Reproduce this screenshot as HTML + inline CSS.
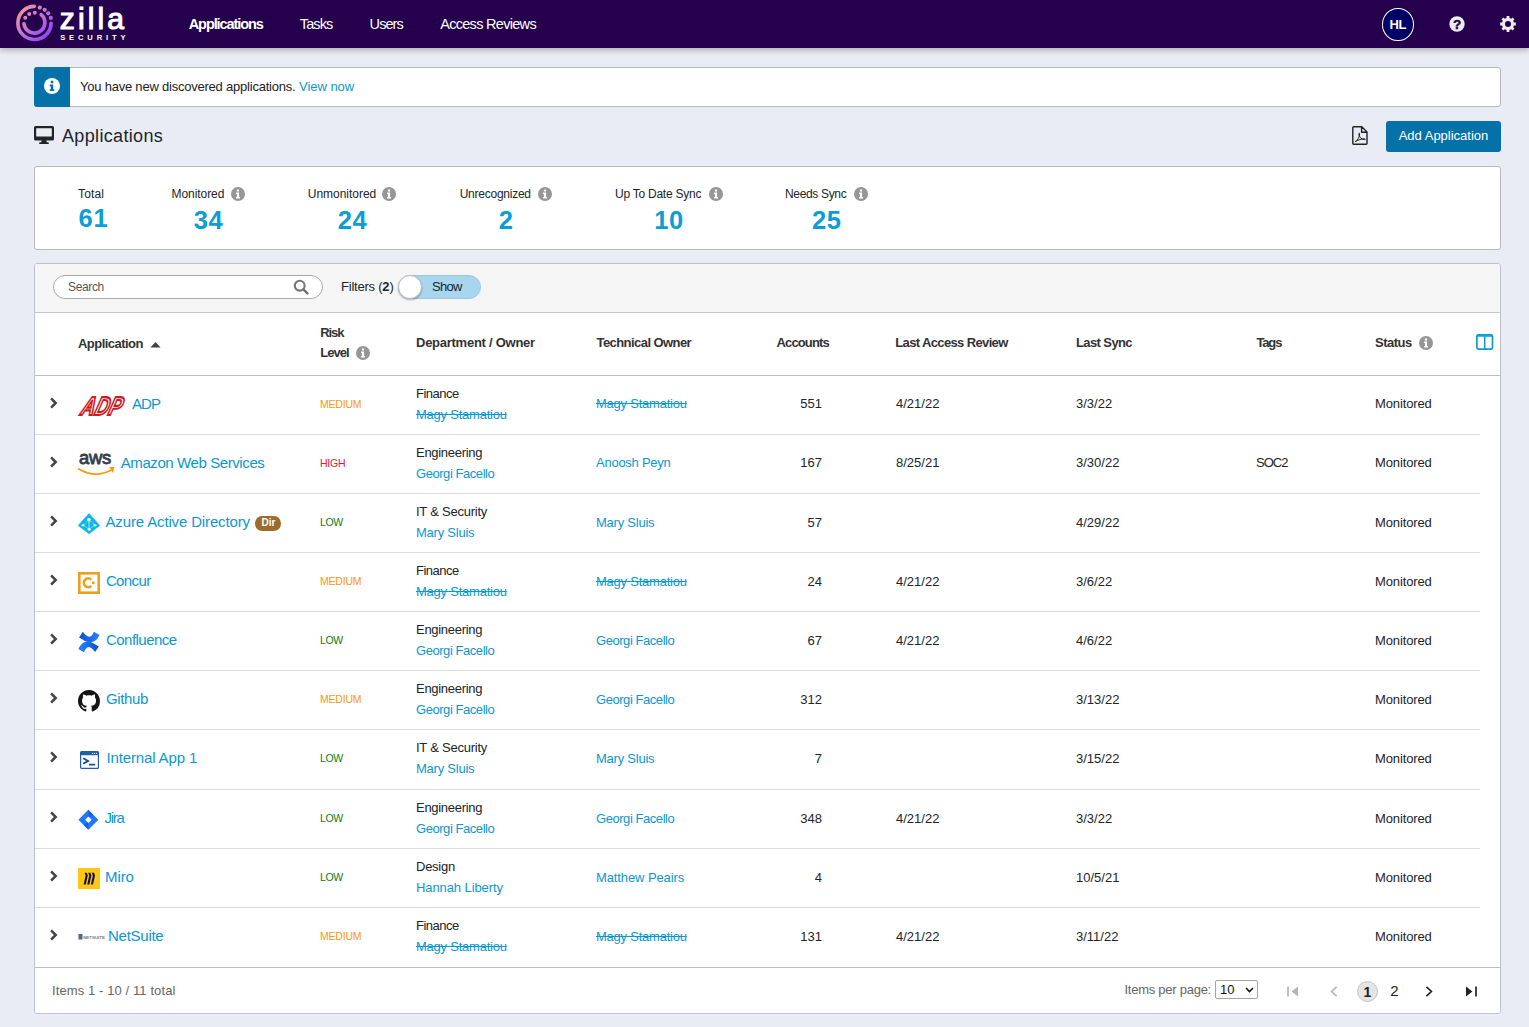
<!DOCTYPE html>
<html lang="en">
<head>
<meta charset="utf-8">
<title>Zilla Security - Applications</title>
<style>
*{box-sizing:border-box;margin:0;padding:0}
html,body{width:1529px;height:1027px;overflow:hidden}
body{background:#e9ecf4;font-family:"Liberation Sans",sans-serif;font-size:13px;color:#212529;position:relative}
a{color:#0a98d0;text-decoration:none}
svg{display:block;overflow:visible}
/* top nav */
#nav{position:absolute;left:0;top:0;width:1529px;height:48px;background:#25004d;box-shadow:0 2px 6px rgba(0,0,0,.28)}
#nav .item{position:absolute;top:15.5px;font-size:14.5px;color:#fff;line-height:16px;white-space:nowrap}
#nav .item.act{font-weight:bold}
#avatar{position:absolute;left:1382px;top:8px;width:31.5px;height:33px;border-radius:50%;background:#000066;border:1px solid #fff;color:#fff;font-weight:bold;font-size:13px;text-align:center;line-height:31.5px;letter-spacing:-.5px}
#logo{position:absolute;left:0;top:0}
/* banner */
#banner{position:absolute;left:34px;top:67px;width:1467px;height:40px;background:#fff;border:1px solid #b9b9b9;border-radius:3px}
#banner .ic{position:absolute;left:-1px;top:-1px;width:36px;height:40px;background:#0472a8;border-radius:3px 0 0 3px}
#banner .tx{position:absolute;left:45px;top:11px;font-size:13px;line-height:16px;white-space:nowrap;color:#222}
/* title */
#title{position:absolute;left:62px;top:125px;font-size:18px;line-height:22px;color:#212529;white-space:nowrap}
#addbtn{position:absolute;left:1386px;top:121px;width:115px;height:31px;background:#0472a8;border-radius:3px;color:#fff;font-size:13px;line-height:30px;text-align:center;white-space:nowrap}
/* stats */
#stats{position:absolute;left:34px;top:166px;width:1467px;height:84px;background:#fff;border:1px solid #b9b9b9;border-radius:3px}
.st{position:absolute;top:0;height:82px}
.st .l{position:absolute;left:0;top:20px;font-size:12px;line-height:14px;color:#212529;white-space:nowrap}
.st .i{position:absolute;top:20px}
.st .n{position:absolute;left:0;width:100%;text-align:center;top:39px;font-size:25.5px;font-weight:bold;color:#0c9dd6;line-height:30px;letter-spacing:.6px;text-indent:.6px}
/* grid panel */
#panel{position:absolute;left:34px;top:263px;width:1467px;height:751px;background:#fff;border:1px solid #bcc2cc;border-radius:3px;overflow:hidden}
#tool{position:absolute;left:0;top:0;width:1465px;height:49px;background:#f5f5f5;border-bottom:1px solid #c3c8d0}
#search{position:absolute;left:18px;top:11px;width:270px;height:24px;border:1px solid #a9a9a9;border-radius:12px;background:#fff}
#search>span{position:absolute;left:14px;top:4px;font-size:12px;line-height:14px;color:#555}
#search svg{position:absolute;left:239px;top:3px}
#filt{position:absolute;left:306px;top:15px;font-size:13px;line-height:16px;white-space:nowrap;color:#212529}
#toggle{position:absolute;left:363px;top:11px;width:83px;height:24px;border-radius:12px;background:#a9d6ef;border:1px solid #9cc7df}
#toggle i{position:absolute;left:-1px;top:-1px;width:24px;height:24px;border-radius:50%;background:#fff;border:1px solid #bdbdbd;box-shadow:0 1px 2px rgba(0,0,0,.3)}
#toggle>span{position:absolute;left:33px;top:3px;font-size:13px;line-height:16px;color:#212529}
/* header */
#head{position:absolute;left:0;top:50px;width:1465px;height:62px;border-bottom:1px solid #bfbfbf}
#head .h{position:absolute;font-weight:bold;font-size:13px;line-height:16px;color:#333;white-space:nowrap}
#head svg{position:absolute}
/* rows */
.row{position:absolute;left:0;width:1445px;height:59px;border-bottom:1px solid #dcdcdc}
.row>*{position:absolute;white-space:nowrap;font-size:13px;line-height:16px}
.row .app{left:43px;top:-1px;height:58px;display:flex;align-items:center;font-size:15px}
.row .app svg{flex:none}
.row .app a{display:block;line-height:18px}
.row .risk{left:285px;top:20px;font-size:10.5px}
.risk.m{color:#fb980c}.risk.h{color:#e3173e}.risk.lo{color:#0f7a10}
.row .dep{left:381px;top:10px}
.row .own{left:381px;top:31px}
.row .tech{left:561px;top:20px}
.row .acc{left:700px;width:87px;text-align:right;top:20px}
.row .lar{left:861px;top:20px}
.row .ls{left:1041px;top:20px}
.row .tag{left:1221px;top:20px}
.row .stt{left:1340px;top:20px}
.row .chev{left:15px;top:21px}
.x{text-decoration:line-through}
.dir{display:inline-block;margin-left:5.5px;width:26px;height:14.5px;border-radius:7.25px;background:#9b6c2c;color:#fff;font-size:10px;font-weight:bold;line-height:14.5px;text-align:center;position:relative;top:1.5px}
/* footer */
#foot{position:absolute;left:0;top:703px;width:1465px;height:46px;border-top:1px solid #bfbfbf;background:#fff}
#foot .t{position:absolute;font-size:13px;line-height:16px;color:#666;white-space:nowrap}
#foot svg{position:absolute}
</style>
</head>
<body>

<div id="nav">
<svg id="logo" width="140" height="48" viewBox="0 0 140 48">
<defs><linearGradient id="lg" gradientUnits="userSpaceOnUse" x1="19" y1="8" x2="49" y2="40"><stop offset="0" stop-color="#f59c90"/><stop offset=".5" stop-color="#c070d8"/><stop offset="1" stop-color="#8a3ffc"/></linearGradient></defs>
<g fill="none" stroke="url(#lg)" stroke-linecap="round">
<path d="M34.36 6.35 A16.6 16.6 0 1 0 51.1 23.35" stroke-width="3.6"/>
<path d="M24.02 23.84 A10.45 10.45 0 1 0 41.21 14.68" stroke-width="3.7"/>
</g>
<g fill="url(#lg)"><circle cx="39.8" cy="7.6" r="2.1"/><circle cx="44.7" cy="9.8" r="2.1"/><circle cx="48.2" cy="13.35" r="2.1"/><circle cx="50.8" cy="17.9" r="2.1"/>
<circle cx="25.3" cy="17.8" r="2"/><circle cx="29.3" cy="14" r="2"/><circle cx="34.8" cy="12.7" r="2"/></g>
<text x="59.8" y="29.3" font-family="Liberation Sans,sans-serif" font-size="30" fill="#fff" stroke="#fff" stroke-width="1.1" letter-spacing="3.1">zilla</text>
<text x="60.2" y="39.9" font-family="Liberation Sans,sans-serif" font-size="7.6" font-weight="bold" fill="#fff" letter-spacing="3.85">SECURITY</text>
</svg>
<div class="item act" style="left:188.7px"><span style="letter-spacing:-1.07px">Applications</span></div>
<div class="item" style="left:299.8px"><span style="letter-spacing:-0.9px">Tasks</span></div>
<div class="item" style="left:369.6px"><span style="letter-spacing:-0.93px">Users</span></div>
<div class="item" style="left:440.2px"><span style="letter-spacing:-0.7px">Access Reviews</span></div>
<div id="avatar">HL</div>
<svg style="position:absolute;left:1449px;top:15.6px" width="16" height="16" viewBox="0 0 16 16"><circle cx="8" cy="8" r="7.7" fill="#ececec"/><text x="8" y="12.8" text-anchor="middle" font-family="Liberation Sans,sans-serif" font-weight="bold" font-size="13.5" fill="#25004d" stroke="#25004d" stroke-width=".4">?</text></svg>
<svg style="position:absolute;left:1500px;top:15.6px" width="16" height="16" viewBox="0 0 16 16"><path fill="#ececec" fill-rule="evenodd" d="M13.93 6.58 L15.88 6.62 L15.88 9.38 L13.93 9.42 L13.20 11.19 L14.55 12.60 L12.60 14.55 L11.19 13.20 L9.42 13.93 L9.38 15.88 L6.62 15.88 L6.58 13.93 L4.81 13.20 L3.40 14.55 L1.45 12.60 L2.80 11.19 L2.07 9.42 L0.12 9.38 L0.12 6.62 L2.07 6.58 L2.80 4.81 L1.45 3.40 L3.40 1.45 L4.81 2.80 L6.58 2.07 L6.62 0.12 L9.38 0.12 L9.42 2.07 L11.19 2.80 L12.60 1.45 L14.55 3.40 L13.20 4.81Z M5.00 8.00 a3.00 3.00 0 1 0 6.00 0 a3.00 3.00 0 1 0 -6.00 0Z"/></svg>
</div>
<div id="banner"><div class="ic"><svg style="position:absolute;left:10px;top:11.3px" width="16" height="16" viewBox="0 0 14 14"><circle cx="7" cy="7" r="7" fill="#fff"/><path fill="#0472a8" d="M5.9 2.5h2.2v2H5.9z M5 5.7h3.1v4.2H9v1.5H5V9.9h.9V7.2H5z"/></svg></div>
<div class="tx"><span style="letter-spacing:-0.22px">You have new discovered applications.</span> <a><span style="letter-spacing:-0.04px">View now</span></a></div></div>
<svg style="position:absolute;left:34px;top:126px" width="20" height="18" viewBox="0 0 20 18"><path fill="#212529" fill-rule="evenodd" d="M1.6 0h16.8A1.6 1.6 0 0 1 20 1.6v11.3a1.6 1.6 0 0 1-1.6 1.6h-6.1l.5 1.7h1.3a.8.8 0 0 1 0 1.7H5.9a.8.8 0 0 1 0-1.7h1.3l.5-1.7H1.6A1.6 1.6 0 0 1 0 12.9V1.6A1.6 1.6 0 0 1 1.6 0z M2.2 2.2v8.4h15.6V2.2z"/></svg>
<div id="title"><span style="letter-spacing:0.34px">Applications</span></div>
<svg style="position:absolute;left:1352px;top:126px" width="16" height="19" viewBox="0 0 16 19"><path d="M1.6 0.8h8.2l5.2 5.2v11.4a.8.8 0 0 1-.8.8H1.6a.8.8 0 0 1-.8-.8V1.6a.8.8 0 0 1 .8-.8z M9.6 1v5.2H15" fill="none" stroke="#222" stroke-width="1.4" stroke-linejoin="round"/><path d="M3.3 15.6c2.2-1.2 4-4 4.4-7.600c.1-1.100-.9-1.100-.9-.1c0 2.700 2.500 5.400 5.800 5.700c1 .1 1-.8 0-.8c-2.800 0-6.500 1.100-9.300 2.800z" fill="none" stroke="#222" stroke-width="1"/></svg>
<div id="addbtn">Add Application</div>
<div id="stats">
<div class="st" style="left:43px;width:26px">
<div class="l"><span style="letter-spacing:0.15px">Total</span></div>
<div class="n" style="top:35.5px">61</div></div>
<div class="st" style="left:136.5px;width:73.5px">
<div class="l"><span style="letter-spacing:-0.06px">Monitored</span></div>
<div class="i" style="left:59.5px"><svg width="14" height="14" viewBox="0 0 14 14"><circle cx="7" cy="7" r="7" fill="#969696"/><path fill="#fff" d="M5.9 2.4h2.2v2H5.9z M5 5.6h3.1v4.3H9v1.5H5V9.9h.9V7.1H5z"/></svg></div>
<div class="n" style="top:37.5px">34</div></div>
<div class="st" style="left:272.8px;width:88.7px">
<div class="l"><span style="letter-spacing:-0.03px">Unmonitored</span></div>
<div class="i" style="left:74.7px"><svg width="14" height="14" viewBox="0 0 14 14"><circle cx="7" cy="7" r="7" fill="#969696"/><path fill="#fff" d="M5.9 2.4h2.2v2H5.9z M5 5.6h3.1v4.3H9v1.5H5V9.9h.9V7.1H5z"/></svg></div>
<div class="n" style="top:37.5px">24</div></div>
<div class="st" style="left:424.7px;width:92.3px">
<div class="l"><span style="letter-spacing:-0.245px">Unrecognized</span></div>
<div class="i" style="left:78.3px"><svg width="14" height="14" viewBox="0 0 14 14"><circle cx="7" cy="7" r="7" fill="#969696"/><path fill="#fff" d="M5.9 2.4h2.2v2H5.9z M5 5.6h3.1v4.3H9v1.5H5V9.9h.9V7.1H5z"/></svg></div>
<div class="n" style="top:37.5px">2</div></div>
<div class="st" style="left:580px;width:107.6px">
<div class="l"><span style="letter-spacing:-0.243px">Up To Date Sync</span></div>
<div class="i" style="left:93.6px"><svg width="14" height="14" viewBox="0 0 14 14"><circle cx="7" cy="7" r="7" fill="#969696"/><path fill="#fff" d="M5.9 2.4h2.2v2H5.9z M5 5.6h3.1v4.3H9v1.5H5V9.9h.9V7.1H5z"/></svg></div>
<div class="n" style="top:37.5px">10</div></div>
<div class="st" style="left:750px;width:83px">
<div class="l"><span style="letter-spacing:-0.333px">Needs Sync</span></div>
<div class="i" style="left:69px"><svg width="14" height="14" viewBox="0 0 14 14"><circle cx="7" cy="7" r="7" fill="#969696"/><path fill="#fff" d="M5.9 2.4h2.2v2H5.9z M5 5.6h3.1v4.3H9v1.5H5V9.9h.9V7.1H5z"/></svg></div>
<div class="n" style="top:37.5px">25</div></div>
</div>
<div id="panel"><div id="tool">
<div id="search"><span><span style="letter-spacing:-0.36px">Search</span></span><svg width="17" height="17" viewBox="0 0 17 17"><circle cx="6.7" cy="6.7" r="4.9" fill="none" stroke="#757575" stroke-width="2.1"/><path d="M10.4 10.4 L14.4 14.4" stroke="#757575" stroke-width="2.6" stroke-linecap="round"/></svg></div>
<div id="filt"><span style="letter-spacing:-0.22px">Filters (</span><b>2</b>)</div>
<div id="toggle"><i></i><span><span style="letter-spacing:-0.7px">Show</span></span></div></div>
<div id="head">
<div class="h" style="left:43px;top:21.5px"><span style="letter-spacing:-0.54px">Application</span></div>
<svg style="left:114.5px;top:27.5px" width="11" height="6" viewBox="0 0 11 6"><path d="M5.5 0 L10.6 5.6 H0.4Z" fill="#444"/></svg>
<div class="h" style="left:285.3px;top:11px"><span style="letter-spacing:-1.1px">Risk</span></div>
<div class="h" style="left:285.3px;top:31px"><span style="letter-spacing:-1px">Level</span></div>
<div style="position:absolute;left:321px;top:32px"><svg width="14" height="14" viewBox="0 0 14 14"><circle cx="7" cy="7" r="7" fill="#969696"/><path fill="#fff" d="M5.9 2.4h2.2v2H5.9z M5 5.6h3.1v4.3H9v1.5H5V9.9h.9V7.1H5z"/></svg></div>
<div class="h" style="left:381px;top:20.5px"><span style="letter-spacing:-0.26px">Department / Owner</span></div>
<div class="h" style="left:561.5px;top:20.5px"><span style="letter-spacing:-0.564px">Technical Owner</span></div>
<div class="h" style="left:741.6px;top:20.5px"><span style="letter-spacing:-0.886px">Accounts</span></div>
<div class="h" style="left:860.3px;top:20.5px"><span style="letter-spacing:-0.635px">Last Access Review</span></div>
<div class="h" style="left:1040.9px;top:20.5px"><span style="letter-spacing:-0.588px">Last Sync</span></div>
<div class="h" style="left:1221.5px;top:20.5px"><span style="letter-spacing:-1.167px">Tags</span></div>
<div class="h" style="left:1340px;top:20.5px"><span style="letter-spacing:-0.52px">Status</span></div>
<div style="position:absolute;left:1384px;top:22px"><svg width="14" height="14" viewBox="0 0 14 14"><circle cx="7" cy="7" r="7" fill="#969696"/><path fill="#fff" d="M5.9 2.4h2.2v2H5.9z M5 5.6h3.1v4.3H9v1.5H5V9.9h.9V7.1H5z"/></svg></div>
<svg style="left:1441px;top:20.4px" width="17.4" height="16" viewBox="0 0 17.4 16"><rect x=".9" y=".9" width="15.6" height="14.2" rx="1.3" fill="none" stroke="#0e9ad1" stroke-width="1.7"/><path d="M8.7 1V15" stroke="#0e9ad1" stroke-width="1.5"/><path d="M1 2H16.4" stroke="#0e9ad1" stroke-width="1.6"/></svg>
</div>
<div id="rows">
<div class="row" style="top:112px;height:59px">
<svg class="chev" width="8" height="12" viewBox="0 0 8 12"><path d="M1.1 1.4 L5.7 6 L1.1 10.6" fill="none" stroke="#444" stroke-width="2.5" stroke-linejoin="miter"/></svg>
<div class="app"><svg width="47" height="21" viewBox="0 0 47 21" style="margin-right:7px;position:relative;top:1.5px"><text x="0" y="19.9" font-family="Liberation Sans,sans-serif" font-weight="bold" font-style="italic" font-size="26" textLength="40" lengthAdjust="spacingAndGlyphs" fill="#fff" stroke="#d0181f" stroke-width="2.1" stroke-linejoin="miter" transform="translate(7.9 0) skewX(-17)">ADP</text></svg><a><span style="letter-spacing:-0.9px">ADP</span></a></div>
<div class="risk m"><span style="letter-spacing:-0.2px">MEDIUM</span></div>
<div class="dep"><span style="letter-spacing:-0.483px">Finance</span></div><a class="own x"><span style="letter-spacing:-0.231px">Magy Stamatiou</span></a>
<a class="tech x"><span style="letter-spacing:-0.231px">Magy Stamatiou</span></a>
<div class="acc">551</div>
<div class="lar">4/21/22</div>
<div class="ls">3/3/22</div>
<div class="stt"><span style="letter-spacing:-0.125px">Monitored</span></div></div>
<div class="row" style="top:171px;height:59px">
<svg class="chev" width="8" height="12" viewBox="0 0 8 12"><path d="M1.1 1.4 L5.7 6 L1.1 10.6" fill="none" stroke="#444" stroke-width="2.5" stroke-linejoin="miter"/></svg>
<div class="app"><svg width="36" height="22" viewBox="0 0 36 22" style="margin-right:6.7px;position:relative;top:1px"><text x="1" y="11.4" font-family="Liberation Sans,sans-serif" font-size="18.4" letter-spacing="-0.2" fill="#333c4b" stroke="#333c4b" stroke-width=".8">aws</text><path d="M0.8 15.9 Q17 25.6 33.4 17" fill="none" stroke="#f90" stroke-width="1.8" stroke-linecap="round"/><path d="M31.4 14.1 L36.2 13.9 L35.1 20.2 Z" fill="#f90"/></svg><a><span style="letter-spacing:-0.406px">Amazon Web Services</span></a></div>
<div class="risk h"><span style="letter-spacing:-0.233px">HIGH</span></div>
<div class="dep"><span style="letter-spacing:-0.29px">Engineering</span></div><a class="own"><span style="letter-spacing:-0.446px">Georgi Facello</span></a>
<a class="tech"><span style="letter-spacing:-0.25px">Anoosh Peyn</span></a>
<div class="acc">167</div>
<div class="lar">8/25/21</div>
<div class="ls">3/30/22</div>
<div class="tag"><span style="letter-spacing:-1px">SOC2</span></div>
<div class="stt"><span style="letter-spacing:-0.125px">Monitored</span></div></div>
<div class="row" style="top:230px;height:59px">
<svg class="chev" width="8" height="12" viewBox="0 0 8 12"><path d="M1.1 1.4 L5.7 6 L1.1 10.6" fill="none" stroke="#444" stroke-width="2.5" stroke-linejoin="miter"/></svg>
<div class="app"><svg width="22" height="22" viewBox="0 0 22 22" style="margin-right:5.5px;position:relative;top:1.5px"><path d="M11 0.4 L21.8 12.5 L11 20.8 L0.2 12.5Z" fill="#0ab7ea" stroke="#0ab7ea" stroke-width=".6" stroke-linejoin="round"/><path d="M11 6.7 L5 12.3 L11.1 16.2 L17 12.3Z" fill="none" stroke="#7fdcf6" stroke-width=".7"/><path d="M11 6.7V16.2" stroke="#5fd2f3" stroke-width="1.8"/><circle cx="11" cy="6.7" r="1.8" fill="#fff"/><ellipse cx="5" cy="12.3" rx="1.6" ry="1.1" fill="#fff"/><ellipse cx="17" cy="12.3" rx="1.6" ry="1.1" fill="#fff"/><circle cx="11.1" cy="16.2" r="1.5" fill="#fff"/></svg><a><span style="letter-spacing:-0.143px">Azure Active Directory</span></a><span class="dir">Dir</span></div>
<div class="risk lo"><span style="letter-spacing:-0.4px">LOW</span></div>
<div class="dep"><span style="letter-spacing:-0.242px">IT &amp; Security</span></div><a class="own"><span style="letter-spacing:-0.23px">Mary Sluis</span></a>
<a class="tech" style="top:21px"><span style="letter-spacing:-0.23px">Mary Sluis</span></a>
<div class="acc" style="top:21px">57</div>
<div class="ls" style="top:21px">4/29/22</div>
<div class="stt" style="top:21px"><span style="letter-spacing:-0.125px">Monitored</span></div></div>
<div class="row" style="top:289px;height:59px">
<svg class="chev" width="8" height="12" viewBox="0 0 8 12"><path d="M1.1 1.4 L5.7 6 L1.1 10.6" fill="none" stroke="#444" stroke-width="2.5" stroke-linejoin="miter"/></svg>
<div class="app"><svg width="22" height="22" viewBox="0 0 22 22" style="margin-right:5.9px;position:relative;top:1.8px"><rect x="1.3" y="1.3" width="19.4" height="19.4" fill="#fff" stroke="#ef9f1b" stroke-width="2.6"/><path d="M13.3 7.6 A4.4 4.4 0 1 0 13.3 14" fill="none" stroke="#ef9f1b" stroke-width="2.6"/><circle cx="15.3" cy="10.8" r="1.5" fill="#ef9f1b"/></svg><a><span style="letter-spacing:-0.6px">Concur</span></a></div>
<div class="risk m"><span style="letter-spacing:-0.2px">MEDIUM</span></div>
<div class="dep"><span style="letter-spacing:-0.483px">Finance</span></div><a class="own x"><span style="letter-spacing:-0.231px">Magy Stamatiou</span></a>
<a class="tech x" style="top:21px"><span style="letter-spacing:-0.231px">Magy Stamatiou</span></a>
<div class="acc" style="top:21px">24</div>
<div class="lar" style="top:21px">4/21/22</div>
<div class="ls" style="top:21px">3/6/22</div>
<div class="stt" style="top:21px"><span style="letter-spacing:-0.125px">Monitored</span></div></div>
<div class="row" style="top:348px;height:59px">
<svg class="chev" width="8" height="12" viewBox="0 0 8 12"><path d="M1.1 1.4 L5.7 6 L1.1 10.6" fill="none" stroke="#444" stroke-width="2.5" stroke-linejoin="miter"/></svg>
<div class="app"><svg width="22" height="22" viewBox="0 0 22 22" style="margin-right:5.9px;position:relative;top:1.5px"><defs><linearGradient id="cf1" x1="0" y1="0" x2="1" y2="0"><stop offset="0" stop-color="#0a4fd0"/><stop offset="1" stop-color="#2a83ff"/></linearGradient></defs><path id="cfp" d="M4.8 0.8 C7 3.6 9 5.6 11.3 5.8 C13.5 5.6 14.8 3.2 15.9 0.7 L21.5 3.9 C20 7 18.8 8.6 17.3 9.6 C15.5 10.9 13 11.5 11 11.2 C8.5 10.9 6.5 9.8 5.3 9 L1.1 6.4 Z" fill="url(#cf1)"/><use href="#cfp" transform="rotate(180 10.95 10.95)" fill="url(#cf1)"/></svg><a><span style="letter-spacing:-0.51px">Confluence</span></a></div>
<div class="risk lo"><span style="letter-spacing:-0.4px">LOW</span></div>
<div class="dep"><span style="letter-spacing:-0.29px">Engineering</span></div><a class="own"><span style="letter-spacing:-0.446px">Georgi Facello</span></a>
<a class="tech" style="top:21px"><span style="letter-spacing:-0.446px">Georgi Facello</span></a>
<div class="acc" style="top:21px">67</div>
<div class="lar" style="top:21px">4/21/22</div>
<div class="ls" style="top:21px">4/6/22</div>
<div class="stt" style="top:21px"><span style="letter-spacing:-0.125px">Monitored</span></div></div>
<div class="row" style="top:407px;height:59px">
<svg class="chev" width="8" height="12" viewBox="0 0 8 12"><path d="M1.1 1.4 L5.7 6 L1.1 10.6" fill="none" stroke="#444" stroke-width="2.5" stroke-linejoin="miter"/></svg>
<div class="app"><svg width="22" height="22" viewBox="0 0 16 16" style="margin-right:5.9px;position:relative;top:2px"><path fill="#161414" d="M8 0C3.58 0 0 3.58 0 8c0 3.54 2.29 6.53 5.47 7.59.4.07.55-.17.55-.38 0-.19-.01-.82-.01-1.49-2.01.37-2.53-.49-2.69-.94-.09-.23-.48-.94-.82-1.13-.28-.15-.68-.52-.01-.53.63-.01 1.08.58 1.23.82.72 1.21 1.87.87 2.33.66.07-.52.28-.87.51-1.07-1.78-.2-3.64-.89-3.64-3.95 0-.87.31-1.59.82-2.15-.08-.2-.36-1.02.08-2.12 0 0 .67-.21 2.2.82.64-.18 1.32-.27 2-.27.68 0 1.36.09 2 .27 1.53-1.04 2.2-.82 2.2-.82.44 1.1.16 1.92.08 2.12.51.56.82 1.27.82 2.15 0 3.07-1.87 3.75-3.65 3.95.29.25.54.73.54 1.48 0 1.07-.01 1.93-.01 2.2 0 .21.15.46.55.38A8.013 8.013 0 0016 8c0-4.42-3.58-8-8-8z"/></svg><a><span style="letter-spacing:-0.34px">Github</span></a></div>
<div class="risk m"><span style="letter-spacing:-0.2px">MEDIUM</span></div>
<div class="dep"><span style="letter-spacing:-0.29px">Engineering</span></div><a class="own"><span style="letter-spacing:-0.446px">Georgi Facello</span></a>
<a class="tech" style="top:21px"><span style="letter-spacing:-0.446px">Georgi Facello</span></a>
<div class="acc" style="top:21px">312</div>
<div class="ls" style="top:21px">3/13/22</div>
<div class="stt" style="top:21px"><span style="letter-spacing:-0.125px">Monitored</span></div></div>
<div class="row" style="top:466px;height:60px">
<svg class="chev" width="8" height="12" viewBox="0 0 8 12"><path d="M1.1 1.4 L5.7 6 L1.1 10.6" fill="none" stroke="#444" stroke-width="2.5" stroke-linejoin="miter"/></svg>
<div class="app"><svg width="21" height="20" viewBox="0 0 21 20" style="margin-right:7.4px;position:relative;top:2px"><rect x="2.6" y="1.6" width="17.8" height="16.8" rx="1" fill="#fff" stroke="#2160a8" stroke-width="1.2"/><rect x="2.6" y="1.6" width="17.8" height="3.6" fill="#2160a8"/><path d="M5.2 8.2 L10 11 L5.2 13.8" fill="none" stroke="#1b4f91" stroke-width="1.9"/><path d="M11 14.6 H17.2" stroke="#1b4f91" stroke-width="1.9"/><circle cx="14.6" cy="3.3" r=".6" fill="#fff"/><circle cx="16.5" cy="3.3" r=".6" fill="#fff"/><circle cx="18.4" cy="3.3" r=".6" fill="#fff"/></svg><a><span style="letter-spacing:-0.13px">Internal App 1</span></a></div>
<div class="risk lo"><span style="letter-spacing:-0.4px">LOW</span></div>
<div class="dep"><span style="letter-spacing:-0.242px">IT &amp; Security</span></div><a class="own"><span style="letter-spacing:-0.23px">Mary Sluis</span></a>
<a class="tech" style="top:21px"><span style="letter-spacing:-0.23px">Mary Sluis</span></a>
<div class="acc" style="top:21px">7</div>
<div class="ls" style="top:21px">3/15/22</div>
<div class="stt" style="top:21px"><span style="letter-spacing:-0.125px">Monitored</span></div></div>
<div class="row" style="top:526px;height:59px">
<svg class="chev" width="8" height="12" viewBox="0 0 8 12"><path d="M1.1 1.4 L5.7 6 L1.1 10.6" fill="none" stroke="#444" stroke-width="2.5" stroke-linejoin="miter"/></svg>
<div class="app"><svg width="21" height="22" viewBox="0 0 21 22" style="margin-right:5.6px;position:relative;top:1.5px"><path d="M10.4 0.8 L20.4 10.8 L10.4 20.8 L0.4 10.8Z" fill="#2176ff"/><path d="M10.4 0.8 L15 5.4 L10.4 10 Z" fill="#0a4fd6" opacity=".55"/><path d="M10.4 20.8 L5.8 16.2 L10.4 11.6 Z" fill="#0a4fd6" opacity=".55"/><path d="M10.4 7.5 L13.7 10.8 L10.4 14.1 L7.1 10.8Z" fill="#fff"/></svg><a><span style="letter-spacing:-1.3px">Jira</span></a></div>
<div class="risk lo"><span style="letter-spacing:-0.4px">LOW</span></div>
<div class="dep"><span style="letter-spacing:-0.29px">Engineering</span></div><a class="own"><span style="letter-spacing:-0.446px">Georgi Facello</span></a>
<a class="tech" style="top:21px"><span style="letter-spacing:-0.446px">Georgi Facello</span></a>
<div class="acc" style="top:21px">348</div>
<div class="lar" style="top:21px">4/21/22</div>
<div class="ls" style="top:21px">3/3/22</div>
<div class="stt" style="top:21px"><span style="letter-spacing:-0.125px">Monitored</span></div></div>
<div class="row" style="top:585px;height:59px">
<svg class="chev" width="8" height="12" viewBox="0 0 8 12"><path d="M1.1 1.4 L5.7 6 L1.1 10.6" fill="none" stroke="#444" stroke-width="2.5" stroke-linejoin="miter"/></svg>
<div class="app"><svg width="22" height="21" viewBox="0 0 22 21" style="margin-right:5px;position:relative;top:1.4px"><rect width="22" height="21" fill="#ffc814"/><path d="M6.6 4.8 L8.8 4.8 L9.8 7.6 L7.8 16.6 L5.6 16.6 L7.6 7.8Z M10.2 4.8 L12.4 4.8 L13.4 7.6 L11.4 16.6 L9.2 16.6 L11.2 7.8Z M13.8 4.8 L16 4.8 L17 7.6 L15 16.6 L12.8 16.6 L14.8 7.8Z" fill="#16123f"/></svg><a><span style="letter-spacing:-0.1px">Miro</span></a></div>
<div class="risk lo"><span style="letter-spacing:-0.4px">LOW</span></div>
<div class="dep"><span style="letter-spacing:-0.26px">Design</span></div><a class="own"><span style="letter-spacing:-0.092px">Hannah Liberty</span></a>
<a class="tech" style="top:21px"><span style="letter-spacing:-0.108px">Matthew Peairs</span></a>
<div class="acc" style="top:21px">4</div>
<div class="ls" style="top:21px">10/5/21</div>
<div class="stt" style="top:21px"><span style="letter-spacing:-0.125px">Monitored</span></div></div>
<div class="row" style="top:644px;height:60px;border-bottom:0">
<svg class="chev" width="8" height="12" viewBox="0 0 8 12"><path d="M1.1 1.4 L5.7 6 L1.1 10.6" fill="none" stroke="#444" stroke-width="2.5" stroke-linejoin="miter"/></svg>
<div class="app"><svg width="25" height="8" viewBox="0 0 25 8" style="margin-right:5px;position:relative;top:1px;opacity:.8"><rect x="0.5" y="1" width="4" height="5.5" fill="#33415c"/><text x="5.2" y="6" font-family="Liberation Sans,sans-serif" font-weight="bold" font-size="4.4" fill="#555">NETSUITE</text></svg><a><span style="letter-spacing:-0.26px">NetSuite</span></a></div>
<div class="risk m"><span style="letter-spacing:-0.2px">MEDIUM</span></div>
<div class="dep"><span style="letter-spacing:-0.483px">Finance</span></div><a class="own x"><span style="letter-spacing:-0.231px">Magy Stamatiou</span></a>
<a class="tech x" style="top:21px"><span style="letter-spacing:-0.231px">Magy Stamatiou</span></a>
<div class="acc" style="top:21px">131</div>
<div class="lar" style="top:21px">4/21/22</div>
<div class="ls" style="top:21px">3/11/22</div>
<div class="stt" style="top:21px"><span style="letter-spacing:-0.125px">Monitored</span></div></div>
</div>
<div id="foot">
<div class="t" style="left:17px;top:15px"><span style="letter-spacing:0.1px">Items 1 - 10 / 11 total</span></div>
<div class="t" style="left:1089.5px;top:14px"><span style="letter-spacing:-0.257px">Items per page:</span></div>
<div style="position:absolute;left:1180px;top:12px;width:43px;height:19px;border:1px solid #a5a5a5;border-radius:2px;background:#fff;font-size:13px;line-height:17px;padding-left:4px;color:#111">10<svg style="left:29px;top:6px" width="9" height="6" viewBox="0 0 9 6"><path d="M1 1 L4.5 4.6 L8 1" fill="none" stroke="#111" stroke-width="1.5"/></svg></div>
<svg style="left:1251.5px;top:17.5px" width="12" height="11" viewBox="0 0 12 11"><path d="M1 0.5V10.5" stroke="#b5b5b5" stroke-width="1.7"/><path d="M11 0.5 L4.6 5.5 L11 10.5Z" fill="#b5b5b5"/></svg>
<svg style="left:1294.5px;top:17.5px" width="8" height="11" viewBox="0 0 8 11"><path d="M6.6 0.8 L1.6 5.5 L6.6 10.2" fill="none" stroke="#b5b5b5" stroke-width="1.7"/></svg>
<div style="position:absolute;left:1322px;top:13px;width:21px;height:21px;border-radius:50%;background:#e4e4e4;border:1px solid #c6c6c6;text-align:center;font-size:14px;font-weight:bold;line-height:20px;color:#222">1</div>
<div style="position:absolute;left:1350.5px;top:13px;width:18px;text-align:center;font-size:15px;line-height:20px;color:#222">2</div>
<svg style="left:1389.5px;top:17.5px" width="8" height="11" viewBox="0 0 8 11"><path d="M1.4 0.8 L6.4 5.5 L1.4 10.2" fill="none" stroke="#222" stroke-width="1.7"/></svg>
<svg style="left:1429.5px;top:17.5px" width="12" height="11" viewBox="0 0 12 11"><path d="M11 0.5V10.5" stroke="#222" stroke-width="1.7"/><path d="M1 0.5 L7.4 5.5 L1 10.5Z" fill="#222"/></svg>
</div></div>
</body>
</html>
